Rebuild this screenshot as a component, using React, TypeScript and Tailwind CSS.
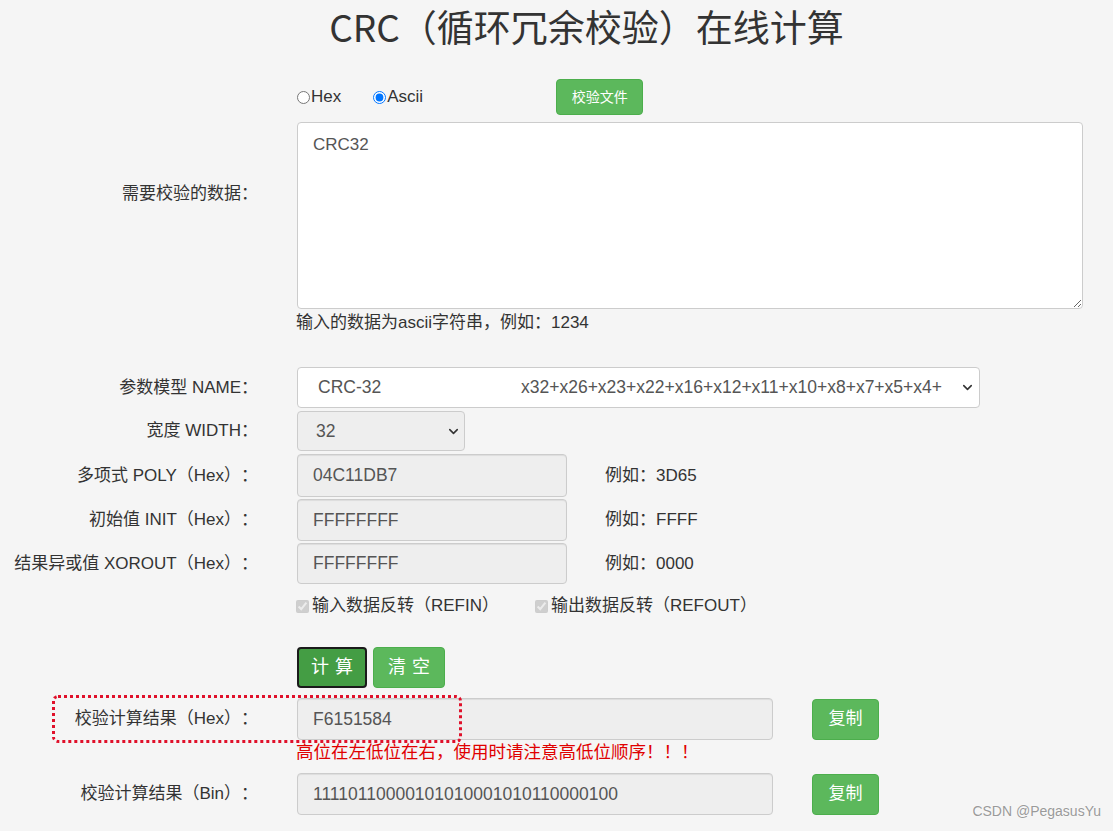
import React from "react";
import { ChevronDown } from "lucide-react";

const Label = ({ children }: { children: React.ReactNode }) => (
  <div className="w-[297px] shrink-0 pr-[39px] flex items-center justify-end text-right whitespace-nowrap">
    {children}
  </div>
);

const ReadInput = ({ value, w }: { value: string; w: string }) => (
  <div
    className={`${w} h-full bg-[#eeeeee] border border-[#cccccc] rounded-[4px] pl-[15px] flex items-center text-[17.5px] text-[#555] shadow-[inset_0_1px_1px_rgba(0,0,0,0.075)]`}
  >
    {value}
  </div>
);

const CopyBtn = () => (
  <button className="ml-[39px] w-[67px] h-[41px] rounded-[4px] bg-[#5cb85c] border border-[#4cae4c] text-white text-[17px]">
    复制
  </button>
);

export default function App() {
  return (
    <div className="relative min-h-[831px] w-full overflow-hidden bg-[#f5f5f5] text-[17px] text-[#333] [text-spacing-trim:space-all] font-['Liberation_Sans','Noto_Sans_CJK_SC',sans-serif]">
      <h1 className="pl-[60px] text-center text-[37px] leading-[53px] text-[#333] font-['Noto_Sans_CJK_SC','Liberation_Sans',sans-serif]">
        CRC（循环冗余校验）在线计算
      </h1>

      {/* data block */}
      <div className="mt-[26px] flex">
        <Label>需要校验的数据：</Label>
        <div className="flex flex-col w-[786px]">
          <div className="h-[36px] flex items-center text-[17px]">
            <label className="flex items-center">
              <input type="radio" name="fmt" className="m-0 w-[13px] h-[13px]" />
              <span className="ml-[1px]">Hex</span>
            </label>
            <label className="flex items-center ml-[32px]">
              <input type="radio" name="fmt" defaultChecked className="m-0 w-[13px] h-[13px] accent-[#0075ff]" />
              <span className="ml-[1px]">Ascii</span>
            </label>
            <button className="ml-[133px] w-[87px] h-[36px] rounded-[4px] bg-[#5cb85c] border border-[#4cae4c] text-white text-[14px]">
              校验文件
            </button>
          </div>
          <textarea
            defaultValue="CRC32"
            className="mt-[7px] h-[187px] w-[786px] bg-white border border-[#cccccc] rounded-[4px] px-[15px] pt-[9px] text-[17px] text-[#555] outline-none"
          />
        </div>
      </div>
      <div className="pl-[296px] mt-[3px] h-[22px] leading-[22px]">输入的数据为ascii字符串，例如：1234</div>

      {/* NAME */}
      <div className="mt-[33px] h-[41px] flex">
        <Label>参数模型 NAME：</Label>
        <div className="w-[683px] h-full bg-white border border-[#cccccc] rounded-[4px] flex items-center pl-[20px] pr-[4px] text-[17.5px] text-[#555]">
          <span className="w-[203px]">CRC-32</span>
          <span className="flex-1">x32+x26+x23+x22+x16+x12+x11+x10+x8+x7+x5+x4+</span>
          <ChevronDown size={15} strokeWidth={2.5} className="text-[#333]" />
        </div>
      </div>

      {/* WIDTH */}
      <div className="mt-[3px] h-[40px] flex">
        <Label>宽度 WIDTH：</Label>
        <div className="w-[168px] h-full bg-[#eeeeee] border border-[#cccccc] rounded-[4px] flex items-center pl-[18px] pr-[3px] text-[17.5px] text-[#555]">
          <span className="flex-1">32</span>
          <ChevronDown size={15} strokeWidth={2.5} className="text-[#333]" />
        </div>
      </div>

      {/* POLY */}
      <div className="mt-[3px] h-[43px] flex">
        <Label>多项式 POLY（Hex）：</Label>
        <ReadInput value="04C11DB7" w="w-[270px]" />
        <div className="ml-[38px] flex items-center">例如：3D65</div>
      </div>
      <div className="mt-[2px] h-[42px] flex">
        <Label>初始值 INIT（Hex）：</Label>
        <ReadInput value="FFFFFFFF" w="w-[270px]" />
        <div className="ml-[38px] flex items-center">例如：FFFF</div>
      </div>
      <div className="mt-[2px] h-[41px] flex">
        <Label>结果异或值 XOROUT（Hex）：</Label>
        <ReadInput value="FFFFFFFF" w="w-[270px]" />
        <div className="ml-[38px] flex items-center">例如：0000</div>
      </div>

      {/* checkboxes */}
      <div className="mt-[7px] h-[30px] flex items-center pl-[296px] text-[17px]">
        <label className="flex items-center w-[239px]">
          <input type="checkbox" checked disabled readOnly className="m-0 w-[13px] h-[13px]" />
          <span className="ml-[3px]">输入数据反转（REFIN）</span>
        </label>
        <label className="flex items-center">
          <input type="checkbox" checked disabled readOnly className="m-0 w-[13px] h-[13px]" />
          <span className="ml-[3px]">输出数据反转（REFOUT）</span>
        </label>
      </div>

      {/* buttons */}
      <div className="mt-[26px] h-[41px] flex pl-[297px]">
        <button className="w-[70px] h-[41px] rounded-[4px] bg-[#449d44] border-2 border-[#1a1a1a] text-white text-[18px] tracking-[6px] pl-[6px]">
          计算
        </button>
        <button className="ml-[6px] w-[72px] h-[41px] rounded-[4px] bg-[#5cb85c] border border-[#4cae4c] text-white text-[18px] tracking-[6px] pl-[6px]">
          清空
        </button>
      </div>

      {/* Hex result */}
      <div className="relative mt-[10px] h-[42px] flex items-center">
        <Label>校验计算结果（Hex）：</Label>
        <ReadInput value="F6151584" w="w-[476px]" />
        <CopyBtn />
        <div className="absolute left-[52px] top-[-3px] w-[410px] h-[48px] border-[3px] border-dotted border-[#e0102a] rounded-[6px] pointer-events-none" />
      </div>
      <div className="mt-[1px] h-[22px] leading-[22px] pl-[296px] text-[17.5px] text-[#e00000]">
        高位在左低位在右，使用时请注意高低位顺序！！！
      </div>

      {/* Bin result */}
      <div className="mt-[10px] h-[42px] flex items-center">
        <Label>校验计算结果（Bin）：</Label>
        <ReadInput value="11110110000101010001010110000100" w="w-[476px]" />
        <CopyBtn />
      </div>

      <div className="absolute right-[12px] bottom-[9px] text-[14px] text-[#9a9a9a] [text-shadow:0_0_2px_#fff]">
        CSDN @PegasusYu
      </div>
    </div>
  );
}
